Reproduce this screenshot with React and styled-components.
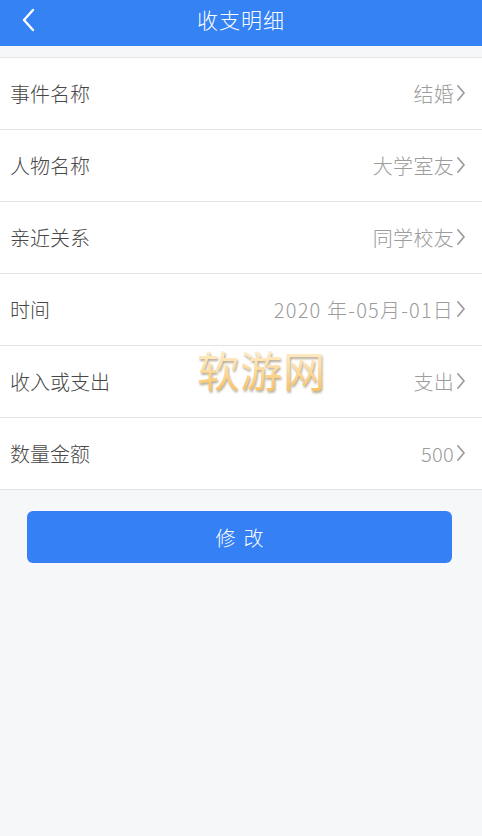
import styled, {createGlobalStyle} from 'styled-components';

const GlobalStyle = createGlobalStyle`
  html, body {
    margin: 0;
    padding: 0;
    background: #f6f7f9;
    font-family: "Noto Sans CJK SC", "Noto Sans", "Liberation Sans", sans-serif;
  }
`;

const Page = styled.div`
  position: relative;
  width: 482px;
  min-height: 836px;
  background: #f6f7f9;
`;

const Header = styled.div`
  display: flex;
  align-items: center;
  justify-content: center;
  position: relative;
  height: 46px;
  background: #3482f4;
  color: #ffffff;
  font-size: 21px;
  font-weight: 300;
`;

const BackBtn = styled.div`
  position: absolute;
  left: 16px;
  top: 6px;
  width: 24px;
  height: 28px;
  display: flex;
  align-items: center;
  justify-content: center;
`;

const Title = styled.div`
  margin-top: -9px;
  letter-spacing: 1px;
`;

const List = styled.div`
  margin-top: 11px;
  background: #ffffff;
  border-top: 1px solid #e6e6e6;
`;

const Row = styled.div`
  display: flex;
  align-items: center;
  justify-content: space-between;
  height: 71px;
  padding: 0 16px 0 10px;
  border-bottom: 1px solid #e3e3e3;
`;

const Label = styled.div`
  font-size: 20px;
  font-weight: 300;
  color: #474747;
`;

const Value = styled.div`
  display: flex;
  align-items: center;
  font-size: 20px;
  font-weight: 300;
  color: #9c9c9c;
  letter-spacing: ${props => props.$wide ? '1.2px' : '0.3px'};
`;

const Chevron = styled.svg`
  margin-left: 2px;
  margin-top: -2px;
`;

const Button = styled.div`
  display: flex;
  align-items: center;
  justify-content: center;
  margin: 21px 30px 0 27px;
  height: 52px;
  border-radius: 6px;
  background: #3480f4;
  color: #ffffff;
  font-size: 20px;
  font-weight: 300;
  letter-spacing: 8px;
  text-indent: 8px;
`;

const Watermark = styled.div`
  position: absolute;
  left: 197px;
  top: 338px;
  font-size: 42px;
  font-weight: 400;
  letter-spacing: 1px;
  background: linear-gradient(180deg, #fff6e6 0%, #ffe0a8 45%, #f8b84e 100%);
  -webkit-background-clip: text;
  background-clip: text;
  color: transparent;
  filter: drop-shadow(1px 2px 1px rgba(110, 85, 40, 0.5));
`;

const rows = [
    {label: '事件名称', value: '结婚'},
    {label: '人物名称', value: '大学室友'},
    {label: '亲近关系', value: '同学校友'},
    {label: '时间', value: '2020 年-05月-01日', wide: true},
    {label: '收入或支出', value: '支出'},
    {label: '数量金额', value: '500'},
];

function App() {
    return (
        <Page>
            <GlobalStyle/>
            <Header>
                <BackBtn>
                    <svg width="14" height="24" viewBox="0 0 14 24">
                        <path d="M12 2 L3 12 L12 22" fill="none" stroke="#fff" strokeWidth="2.4"
                              strokeLinecap="round" strokeLinejoin="round"/>
                    </svg>
                </BackBtn>
                <Title>收支明细</Title>
            </Header>
            <List>
                {
                    rows.map(item => (
                        <Row key={item.label}>
                            <Label>{item.label}</Label>
                            <Value $wide={item.wide}>
                                {item.value}
                                <Chevron width="10" height="18" viewBox="0 0 10 18">
                                    <path d="M2 2 L8 9 L2 16" fill="none" stroke="#9c9c9c" strokeWidth="1.8"
                                          strokeLinecap="round" strokeLinejoin="round"/>
                                </Chevron>
                            </Value>
                        </Row>
                    ))
                }
            </List>
            <Button>修改</Button>
            <Watermark>软游网</Watermark>
        </Page>
    )
}

export default App;
